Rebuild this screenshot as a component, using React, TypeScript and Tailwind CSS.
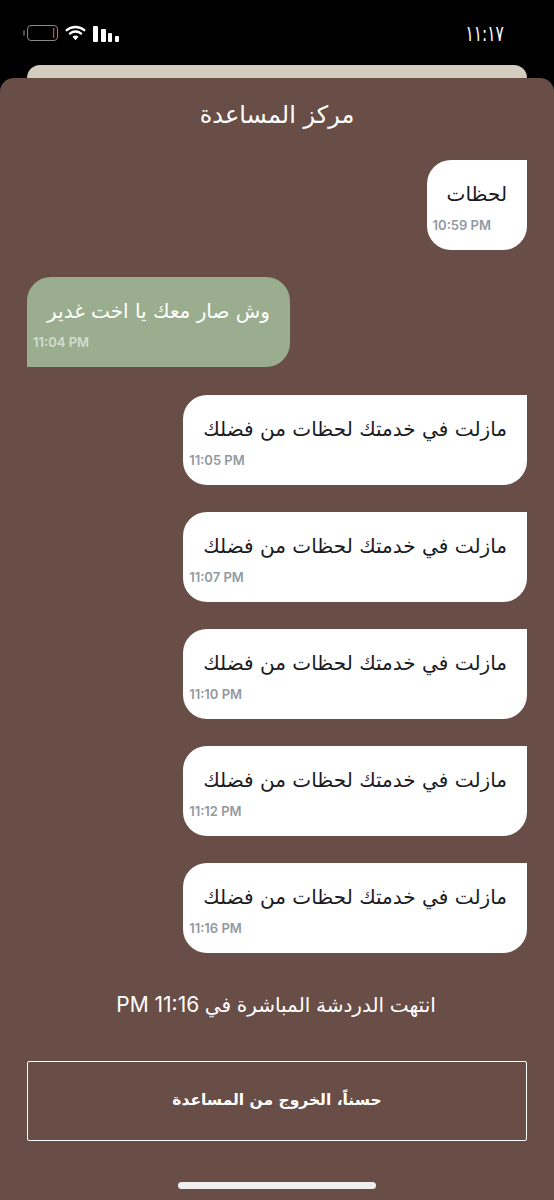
const AR = "font-['DejaVu_Sans',sans-serif]";

function Battery() {
  return (
    <svg width="36" height="18" viewBox="0 0 36 18" className="block">
      <path d="M1 7v4" stroke="#777" strokeWidth="1.4" strokeLinecap="round" />
      <rect x="4.5" y="1.5" width="30" height="15" rx="3.5" fill="none" stroke="#8a8a8a" strokeWidth="1" />
      <rect x="30" y="4" width="1.3" height="10" fill="#e23b3b" />
    </svg>
  );
}

function Wifi() {
  return (
    <svg width="21" height="16" viewBox="0 0 20 16" className="block">
      <path d="M1.2 5.2C6 .9 14 .9 18.8 5.2" fill="none" stroke="#fff" strokeWidth="2.3" strokeLinecap="round" />
      <path d="M4.4 8.6C7.6 5.8 12.4 5.8 15.6 8.6" fill="none" stroke="#fff" strokeWidth="2.3" strokeLinecap="round" />
      <path d="M7.6 11.7c1.4-1 3.4-1 4.8 0L10 14.8z" fill="#fff" stroke="#fff" strokeWidth="1" strokeLinejoin="round" />
    </svg>
  );
}

function Signal() {
  return (
    <div className="flex items-end gap-[2.5px] h-[16px] ml-[1px] mt-[2px]">
      <div className="w-[5px] h-[16px] bg-white rounded-[1px]" />
      <div className="w-[5px] h-[13px] bg-white rounded-[1px]" />
      <div className="w-[4px] h-[9px] bg-white rounded-[1px]" />
      <div className="w-[4px] h-[6px] bg-white rounded-[1px]" />
    </div>
  );
}

function Bubble({ text, time, mine = true }: { text: string; time: string; mine?: boolean }) {
  return (
    <div className={`flex ${mine ? "justify-end" : "justify-start"}`}>
      <div
        className={`h-[90px] rounded-[24px] px-[6px] pt-[19px] flex flex-col ${
          mine ? "bg-white rounded-tr-none" : "bg-[#9aae8f] rounded-bl-none"
        }`}
      >
        <div dir="rtl" className={`${AR} text-[20.05px] leading-[30px] px-[14px] ${mine ? "text-[#1a1a22]" : "text-white"}`}>
          {text}
        </div>
        <div
          className={`font-['Inter',sans-serif] font-semibold text-[13px] leading-[16px] mt-[8px] text-left ${
            mine ? "text-[#9299a2]" : "text-[#d4dccf]"
          }`}
        >
          {time}
        </div>
      </div>
    </div>
  );
}

const REPEAT = "مازلت في خدمتك لحظات من فضلك";

export default function App() {
  return (
    <div className="w-[554px] h-[1200px] bg-black overflow-hidden flex flex-col">
      <div className="h-[65px] shrink-0 flex items-start justify-between pl-[23px] pr-[50px] pt-[24px]">
        <div className="flex items-center gap-[6px]">
          <Battery />
          <Wifi />
          <Signal />
        </div>
        <div className={`${AR} text-white text-[22px] leading-[20px] origin-right scale-x-[0.7]`} dir="ltr">
          ١١:١٧
        </div>
      </div>
      <div className="h-[13px] shrink-0 mx-[27px] bg-[#d5ccc0] rounded-t-[14px]" />
      <div className="flex-1 bg-[#694e47] rounded-t-[14px] flex flex-col px-[27px]">
        <div dir="rtl" className={`${AR} text-white text-[24px] leading-[32px] text-center pt-[21px]`}>
          مركز المساعدة
        </div>
        <div className="flex flex-col gap-[27px] mt-[29px]">
          <Bubble text="لحظات" time="10:59 PM" />
          <Bubble text="وش صار معك يا اخت غدير" time="11:04 PM" mine={false} />
          <div className="flex flex-col gap-[27px] mt-[1px]">
            <Bubble text={REPEAT} time="11:05 PM" />
            <Bubble text={REPEAT} time="11:07 PM" />
            <Bubble text={REPEAT} time="11:10 PM" />
            <Bubble text={REPEAT} time="11:12 PM" />
            <Bubble text={REPEAT} time="11:16 PM" />
          </div>
        </div>
        <div dir="rtl" className="font-['Inter','DejaVu_Sans',sans-serif] text-white text-[20px] leading-[30px] text-center mt-[37px] pr-[2px]">
          انتهت الدردشة المباشرة في <span className="text-[21px]">11:16 PM</span>
        </div>
        <div className="mt-[41px] h-[80px] border-[1.5px] border-white rounded-[2px] flex items-center justify-center">
          <div dir="rtl" className={`${AR} text-white font-semibold text-[15.5px]`}>
            حسناً، الخروج من المساعدة
          </div>
        </div>
        <div className="mt-[41px] mx-auto w-[198px] h-[7px] rounded-full bg-[#eeeeee]" />
      </div>
    </div>
  );
}
